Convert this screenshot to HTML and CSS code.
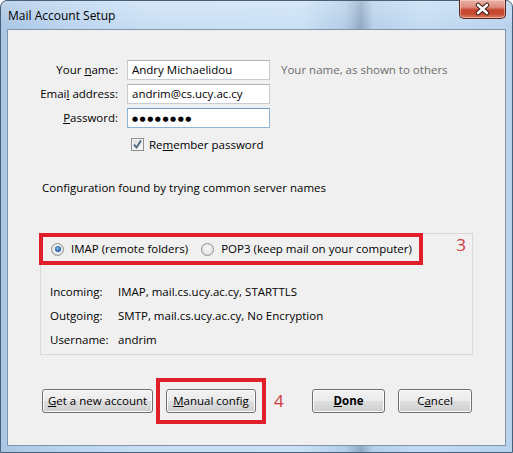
FILE: index.html
```html
<!DOCTYPE html>
<html>
<head>
<meta charset="utf-8">
<link rel="stylesheet" href="styles.css">
</head>
<body>
<div class="window">
  <div class="titlebar">
    <span class="title">Mail Account Setup</span>
    <div class="close">
      <svg width="45" height="18" viewBox="0 0 45 18">
        <path d="M18 5 L27 13 M27 5 L18 13" stroke="#3a1a16" stroke-width="4.6" stroke-linecap="round"/>
        <path d="M18 5 L27 13 M27 5 L18 13" stroke="#ffffff" stroke-width="2.6" stroke-linecap="round"/>
      </svg>
    </div>
  </div>
  <div class="client">
    <div class="form">
      <div class="label">Your <u>n</u>ame:</div>
      <div class="field">Andry Michaelidou</div>
      <div class="hint">Your name, as shown to others</div>

      <div class="label">Emai<u>l</u> address:</div>
      <div class="field">andrim@cs.ucy.ac.cy</div>
      <div></div>

      <div class="label"><u>P</u>assword:</div>
      <div class="field focus"><span class="dots">●●●●●●●●</span></div>
      <div></div>

      <div></div>
      <div class="check-row">
        <span class="checkbox">
          <svg width="11" height="11" viewBox="0 0 11 11"><path d="M2 5.5 L4.5 8.5 L9 1.5" fill="none" stroke="#4b5f7e" stroke-width="1.8"/></svg>
        </span>
        <span>Re<u>m</u>ember password</span>
      </div>
      <div></div>
    </div>

    <div class="status">Configuration found by trying common server names</div>

    <div class="box">
      <div class="proto-row">
        <div class="mark-box proto">
          <span class="radio checked"></span><span class="radio-label">IMAP (remote folders)</span>
          <span class="radio pop"></span><span class="radio-label">POP3 (keep mail on your computer)</span>
        </div>
        <span class="num num3">3</span>
      </div>
      <div class="info">
        <div>Incoming:</div><div>IMAP, mail.cs.ucy.ac.cy, STARTTLS</div>
        <div>Outgoing:</div><div>SMTP, mail.cs.ucy.ac.cy, No Encryption</div>
        <div>Username:</div><div>andrim</div>
      </div>
    </div>

    <div class="buttons">
      <button class="btn b-new"><u>G</u>et a new account</button>
      <div class="mark-box wrap-manual">
        <button class="btn b-manual"><u>M</u>anual config</button>
      </div>
      <span class="num num4">4</span>
      <button class="btn b-done"><u>D</u>one</button>
      <button class="btn b-cancel">C<u>a</u>ncel</button>
    </div>
  </div>
</div>
</body>
</html>
```

FILE: styles.css
```css
html, body {
  margin: 0;
  padding: 0;
  width: 513px;
  height: 453px;
  overflow: hidden;
  background: #ffffff;
}
body {
  font-family: "Open Sans", "Noto Sans", sans-serif;
  font-size: 11.5px;
  color: #000;
}
.window {
  width: 513px;
  height: 453px;
  box-sizing: border-box;
  display: flex;
  flex-direction: column;
  border: 1px solid #465f7a;
  border-radius: 7px 7px 0 0;
  padding: 0 6px 6px 6px;
  background:
    linear-gradient(180deg, rgba(255,255,255,0.25) 0px, rgba(255,255,255,0) 28px),
    linear-gradient(90deg, #a9c6e4 0px, #b9d3ee 60px, #c8def4 150px, #c9e0f5 300px, #b2cce6 345px, #8fa9c4 360px, #b5cfe9 372px, #c3dbf2 420px, #b8d2ec 513px);
}
.titlebar {
  height: 28px;
  display: flex;
  align-items: flex-start;
  flex: none;
}
.title {
  padding: 7px 0 0 1px;
  line-height: 16px;
  font-size: 12px;
  color: #000;
}
.close {
  margin-left: auto;
  margin-top: -1px;
  width: 45px;
  height: 18px;
  border: 1px solid #5a2720;
  border-top: none;
  border-radius: 0 0 5px 5px;
  background: linear-gradient(180deg, #e9b3a8 0%, #dc8c7c 40%, #c74830 55%, #c64a30 75%, #d77a5f 100%);
  box-shadow: inset 0 0 0 1px rgba(255,220,210,0.5);
}
.close svg { display: block; }
.client {
  flex: 1;
  border: 1px solid #8194a9;
  background: #f0f0f0;
  display: flex;
  flex-direction: column;
  padding-top: 30px;
}
.form {
  display: grid;
  grid-template-columns: 111px 143px auto;
  grid-auto-rows: 20px;
  row-gap: 4px;
  column-gap: 8px;
}
.label {
  text-align: right;
  line-height: 20px;
  padding-right: 1px;
  white-space: nowrap;
}
.field {
  box-sizing: border-box;
  border: 1px solid #c9cdd3;
  border-top-color: #aeb3b9;
  background: #fff;
  line-height: 18px;
  padding-left: 4px;
  white-space: nowrap;
  overflow: hidden;
}
.field.focus {
  border-color: #8fb4d6;
  border-top-color: #6d96bf;
}
.dots {
  font-family: "DejaVu Sans", sans-serif;
  font-size: 7px;
  letter-spacing: 1.5px;
  position: relative;
  top: -1px;
}
.hint {
  line-height: 20px;
  color: #6d6d6d;
  margin-left: 3px;
  white-space: nowrap;
}
.check-row {
  display: flex;
  align-items: center;
  gap: 5px;
  padding-left: 4px;
  margin-top: 5px;
  white-space: nowrap;
}
.checkbox {
  width: 11px;
  height: 11px;
  border: 1px solid #8e8f8f;
  background: linear-gradient(135deg, #dcdcdc, #f8f8f8);
  box-shadow: inset 0 0 0 1px #f4f4f4;
  display: block;
  flex: none;
}
.checkbox svg { display: block; }
.status {
  margin: 28px 0 0 34px;
  line-height: 16px;
}
.box {
  margin: 37px 0 0 32px;
  width: 433px;
  box-sizing: border-box;
  border: 1px solid #d8d8d8;
  padding-bottom: 3px;
}
.proto-row {
  display: flex;
  align-items: center;
}
.mark-box {
  border: 4px solid #e01f2b;
}
.proto {
  box-sizing: border-box;
  margin: -1px 0 0 -2px;
  width: 384px;
  height: 32px;
  display: flex;
  align-items: center;
  padding-left: 8px;
  white-space: nowrap;
  flex: none;
}
.radio {
  width: 11px;
  height: 11px;
  border-radius: 50%;
  border: 1px solid #8c8e91;
  background: radial-gradient(circle at 50% 40%, #fafafa, #d9d9d9);
  box-sizing: content-box;
  flex: none;
  position: relative;
}
.radio.checked::after {
  content: "";
  position: absolute;
  left: 2.5px;
  top: 2.5px;
  width: 6px;
  height: 6px;
  border-radius: 50%;
  background: radial-gradient(circle at 45% 40%, #8cc4f0 0, #2b66a8 55%, #1b3e72 100%);
}
.radio.pop { margin-left: 13px; }
.radio-label { margin-left: 7px; line-height: 16px; }
.num {
  color: #cc3a42;
  font-size: 17px;
  font-family: "Open Sans", sans-serif;
  line-height: 20px;
}
.num3 {
  margin-left: auto;
  margin-right: 6px;
  margin-top: -9px;
}
.info {
  display: grid;
  grid-template-columns: 68px auto;
  grid-auto-rows: 24px;
  align-items: center;
  margin: 14px 0 0 9px;
  white-space: nowrap;
}
.buttons {
  display: flex;
  align-items: center;
  margin-top: 23px;
  padding: 0 33px 0 34px;
}
.btn {
  font-family: "Open Sans", sans-serif;
  font-size: 11.5px;
  color: #000;
  height: 24px;
  padding: 0;
  border: 1px solid #707070;
  border-radius: 3px;
  background: linear-gradient(180deg, #f2f2f2 0%, #ebebeb 48%, #dddddd 52%, #cfcfcf 100%);
  box-shadow: inset 0 0 0 1px #fbfbfb;
  line-height: 20px;
  white-space: nowrap;
}
.b-new { width: 111px; }
.wrap-manual {
  margin-left: 3px;
  padding: 7px 6px;
}
.b-manual { width: 90px; display: block; }
.num4 { margin-left: 8px; }
.b-done { width: 73px; margin-left: auto; font-weight: bold; }
.b-cancel { width: 74px; margin-left: 13px; }
```
